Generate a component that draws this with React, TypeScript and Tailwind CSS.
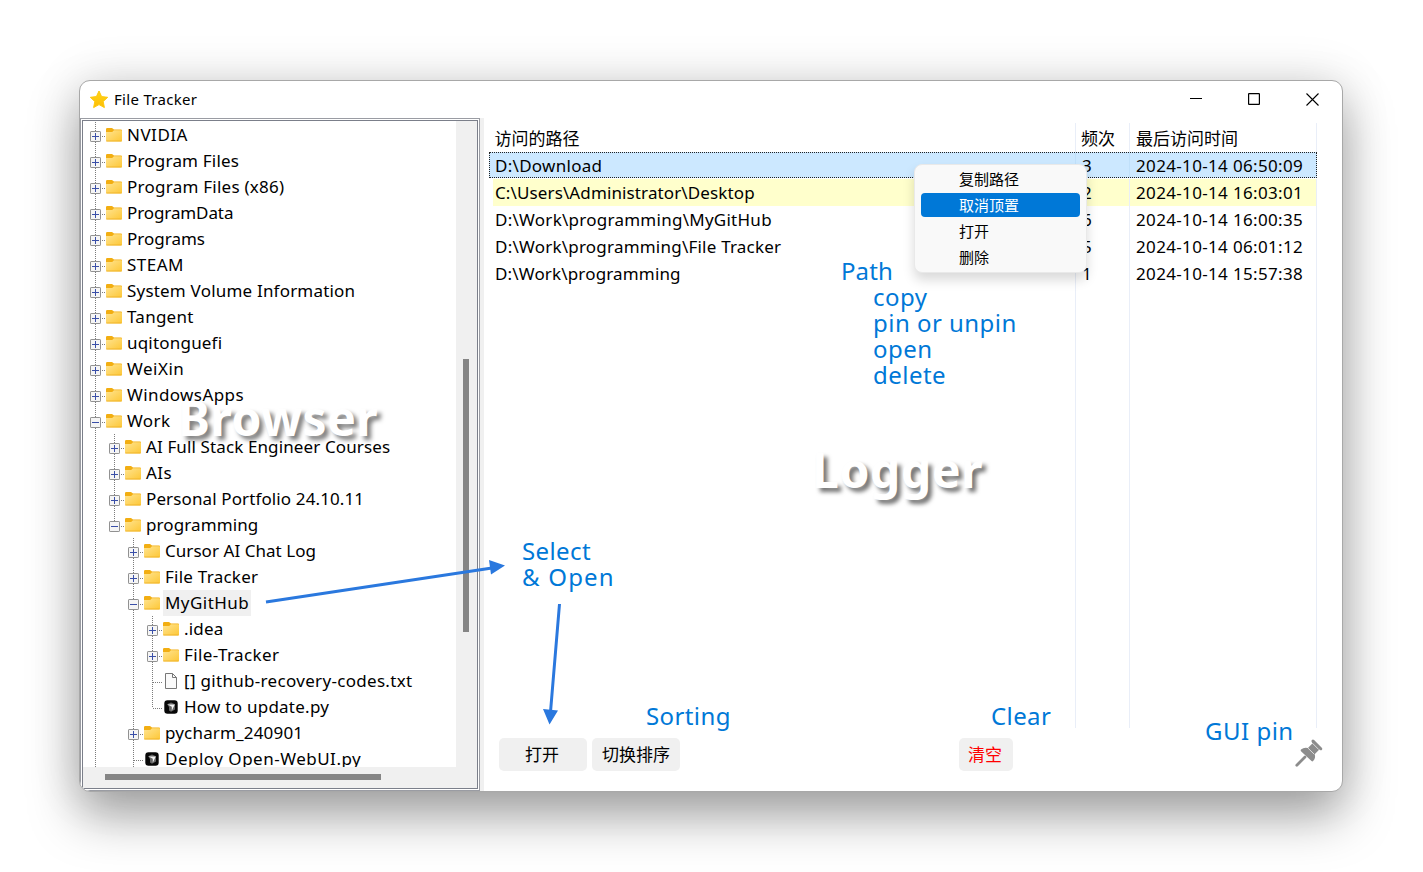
import React from "react";

type Kind = "folder" | "text" | "python";
type Guide = "line" | "none";

interface TreeRow {
  label: string;
  depth: number;
  kind?: Kind;
  open?: boolean;
  last?: boolean;
  selected?: boolean;
  /** Which ancestor levels still have siblings below this row. */
  trail?: Guide[];
  tracking?: string;
}

const tree: TreeRow[] = [
  { label: "NVIDIA", depth: 0, tracking: "tracking-[0.5px]" },
  { label: "Program Files", depth: 0 },
  { label: "Program Files (x86)", depth: 0, tracking: "tracking-[0.25px]" },
  { label: "ProgramData", depth: 0, tracking: "tracking-[-0.1px]" },
  { label: "Programs", depth: 0, tracking: "tracking-[0px]" },
  { label: "STEAM", depth: 0, tracking: "tracking-[0.5px]" },
  { label: "System Volume Information", depth: 0 },
  { label: "Tangent", depth: 0, tracking: "tracking-[0.25px]" },
  { label: "uqitonguefi", depth: 0 },
  { label: "WeiXin", depth: 0, tracking: "tracking-[0.5px]" },
  { label: "WindowsApps", depth: 0, tracking: "tracking-[0.4px]" },
  { label: "Work", depth: 0, open: true, tracking: "tracking-[0.4px]" },
  { label: "AI Full Stack Engineer Courses", depth: 1, trail: ["line"], tracking: "tracking-[0.12px]" },
  { label: "AIs", depth: 1, trail: ["line"], tracking: "tracking-[0.4px]" },
  { label: "Personal Portfolio 24.10.11", depth: 1, trail: ["line"], tracking: "tracking-[0.12px]" },
  { label: "programming", depth: 1, open: true, last: true, trail: ["line"], tracking: "tracking-[0.1px]" },
  { label: "Cursor AI Chat Log", depth: 2, trail: ["line", "none"], tracking: "tracking-[0.05px]" },
  { label: "File Tracker", depth: 2, trail: ["line", "none"], tracking: "tracking-[0.25px]" },
  { label: "MyGitHub", depth: 2, open: true, selected: true, trail: ["line", "none"], tracking: "tracking-[0.45px]" },
  { label: ".idea", depth: 3, trail: ["line", "none", "line"] },
  { label: "File-Tracker", depth: 3, trail: ["line", "none", "line"], tracking: "tracking-[0.4px]" },
  { label: "[] github-recovery-codes.txt", depth: 3, kind: "text", trail: ["line", "none", "line"], tracking: "tracking-[0.31px]" },
  { label: "How to update.py", depth: 3, kind: "python", last: true, trail: ["line", "none", "line"], tracking: "tracking-[0.25px]" },
  { label: "pycharm_240901", depth: 2, trail: ["line", "none"], tracking: "tracking-[0.17px]" },
  { label: "Deploy Open-WebUI.py", depth: 2, kind: "python", trail: ["line", "none"], tracking: "tracking-[0.5px]" },
];

const logs = [
  { path: "D:\\Download", count: 3, time: "2024-10-14 06:50:09" },
  { path: "C:\\Users\\Administrator\\Desktop", count: 2, time: "2024-10-14 16:03:01" },
  { path: "D:\\Work\\programming\\MyGitHub", count: 6, time: "2024-10-14 16:00:35" },
  { path: "D:\\Work\\programming\\File Tracker", count: 5, time: "2024-10-14 06:01:12" },
  { path: "D:\\Work\\programming", count: 1, time: "2024-10-14 15:57:38" },
];

function FolderIcon() {
  return (
    <svg width="16" height="14" viewBox="0 0 16 14" className="block shrink-0">
      <defs>
        <linearGradient id="folder" x1="0" y1="0" x2="1" y2="1">
          <stop offset="0" stopColor="#ffe491" />
          <stop offset="1" stopColor="#fdc736" />
        </linearGradient>
      </defs>
      <path d="M0 1.200Q0 0 1.200 0H6l2 1.500h7q1 0 1 1V5H0z" fill="#f2ae12" />
      <path d="M0 4h6.200L8 2.300h7.200q.8 0 .8.8v9.400q0 .9-1 .9H1q-1 0-1-1z" fill="url(#folder)" />
      <path d="M.3 13h15.400" stroke="#eeaf25" strokeWidth=".8" />
    </svg>
  );
}

function TextFileIcon() {
  return (
    <svg width="16" height="16" viewBox="0 0 16 16" className="block shrink-0">
      <path d="M2.500.5h7l4 4v11h-11z" fill="#fafafa" stroke="#777" />
      <path d="M9.500.5v4h4" fill="none" stroke="#777" />
    </svg>
  );
}

function PythonFileIcon() {
  return (
    <svg width="16" height="16" viewBox="0 0 16 16" className="block shrink-0">
      <rect x="1.300" y="1.200" width="13.400" height="13.600" rx="3.200" fill="#080808" />
      <path d="M4.200 5.200L8 3.600l4 1.600v5.200l-4 2.400-2-1.400V8z" fill="#666" />
      <path d="M4.500 5.400h7.300L8.800 11.800V7.800z" fill="#f3f3f3" />
    </svg>
  );
}

function Expander({ open }: { open?: boolean }) {
  return (
    <svg width="11" height="11" viewBox="0 0 11 11" className="block">
      <rect x=".5" y=".5" width="10" height="10" rx=".6" fill="#f5f5f5" stroke="#919191" />
      <path d="M2 5.500h7" stroke="#3a4fa8" />
      {!open && <path d="M5.500 2v7" stroke="#3a4fa8" />}
    </svg>
  );
}

const dotsV = "bg-[repeating-linear-gradient(to_bottom,#7c7c7c_0_1px,transparent_1px_2px)]";
const dotsH = "bg-[repeating-linear-gradient(to_right,#7c7c7c_0_1px,transparent_1px_2px)]";

function TreeItem({ row }: { row: TreeRow }) {
  const kind = row.kind ?? "folder";
  const isFolder = kind === "folder";
  return (
    <li className="flex h-[26px] shrink-0 items-stretch pl-[3px]">
      {(row.trail ?? []).map((g, i) => (
        <span key={i} className="flex w-[19px] shrink-0 justify-center">
          {g === "line" && <span className={`w-px ${dotsV}`} />}
        </span>
      ))}
      <span className="relative flex w-5 shrink-0 pl-[9px]">
        <span className={`w-px ${row.last ? "h-[14px]" : "h-full"} ${dotsV}`} />
        <span className={`mt-[14px] h-px flex-1 ${dotsH}`} />
        {isFolder && (
          <span className="absolute left-1 top-[9px]">
            <Expander open={row.open} />
          </span>
        )}
      </span>
      <span className={`flex w-4 shrink-0 ${isFolder ? "pt-[6px]" : "pt-[5px]"}`}>
        {kind === "folder" && <FolderIcon />}
        {kind === "text" && <TextFileIcon />}
        {kind === "python" && <PythonFileIcon />}
      </span>
      <span
        className={`ml-[3px] whitespace-pre pl-[2px] pr-[2px] text-[17px] leading-[25px] ${row.tracking ?? "tracking-[0.2px]"} ${row.selected ? "bg-[#f0f0f0]" : ""}`}
      >
        {row.label}
      </span>
    </li>
  );
}

function TitleBar() {
  return (
    <header className="flex h-[37px] shrink-0 items-center pb-px pl-[9px] text-black">
      <svg width="20" height="19" viewBox="0 0 20 19" className="shrink-0">
        <defs>
          <linearGradient id="star" x1="0" y1="0" x2="0" y2="1">
            <stop offset="0" stopColor="#ffd51a" />
            <stop offset="1" stopColor="#fdbd05" />
          </linearGradient>
        </defs>
        <path
          d="M10 1l2.600 5.600 6.100.7-4.500 4.200 1.200 6.100L10 14.600l-5.400 3 1.200-6.100L1.300 7.300l6.100-.7z"
          fill="url(#star)"
          stroke="#fdc80e"
          strokeLinejoin="round"
        />
      </svg>
      <h1 className="-mt-px ml-[5px] text-[15px] leading-5 tracking-[0.3px]">File Tracker</h1>
      <div className="ml-auto flex items-center gap-[46px] pr-[23.500px]">
        <svg width="12" height="12" viewBox="0 0 12 12">
          <path d="M0 5.500h12" stroke="#000" />
        </svg>
        <svg width="12" height="12" viewBox="0 0 12 12">
          <rect x=".6" y=".6" width="10.800" height="10.800" rx=".5" fill="none" stroke="#000" strokeWidth="1.200" />
        </svg>
        <svg width="13" height="13" viewBox="0 0 13 13">
          <path d="M.5.5l12 12M12.500.5l-12 12" stroke="#000" strokeWidth="1.100" />
        </svg>
      </div>
    </header>
  );
}

function Browser() {
  return (
    <section className="w-[400px] shrink-0 border border-[#9a9ca3] bg-white p-px">
      <div className="flex h-full flex-col border border-[#7b7f8a] bg-[#f0f0f0]">
        <div className="flex min-h-0 flex-1">
          <ul className="flex w-[373px] flex-col overflow-hidden bg-white pt-px">
            {tree.map((row) => (
              <TreeItem key={row.label} row={row} />
            ))}
          </ul>
          <div className="flex-1 pl-[7px] pt-[238px]">
            <div className="h-[273px] w-[6px] bg-[#858585]" />
          </div>
        </div>
        <div className="h-[21px] pl-[22px] pt-[7px]">
          <div className="h-[6px] w-[276px] bg-[#858585]" />
        </div>
      </div>
    </section>
  );
}

function ContextMenu() {
  return (
    <div className="absolute left-[914px] top-[164px] flex h-[109px] w-[173px] flex-col rounded-lg border border-[#e9e9e9] bg-[#f9f9f9] px-[6px] pt-px text-[15px] shadow-[0_7px_12px_rgba(0,0,0,0.15)]">
      <div className="flex h-[26px] items-center pl-[38px]">复制路径</div>
      <div className="flex h-[26px] items-center">
        <div className="flex h-6 flex-1 items-center rounded bg-[#0078d7] pl-[38px] text-white">取消顶置</div>
      </div>
      <div className="flex h-[26px] items-center pl-[38px]">打开</div>
      <div className="flex h-[26px] items-center pl-[38px]">删除</div>
    </div>
  );
}

const rowTone = ["bg-[#cce8ff]", "bg-[#ffffcc]", "", "", ""];
const pathTracking = [
  "tracking-[0.28px]",
  "tracking-[0.12px]",
  "tracking-[0.26px]",
  "tracking-[0.22px]",
  "tracking-[0.16px]",
];

function Logger() {
  return (
    <section className="flex min-w-0 flex-1 flex-col border-l-4 border-[#f0f0f0] pl-[5px] text-[17px]">
      <div className="mt-[5px] grid h-[605px] w-[828px] grid-cols-[587px_54px_187px] grid-rows-[29px_27px_27px_27px_27px_27px_1fr]">
        <div className="border-r border-[#e9eef8] pl-[5.500px] leading-[31px]">访问的路径</div>
        <div className="border-r border-[#e9eef8] pl-[5px] leading-[31px]">频次</div>
        <div className="border-r border-[#e9eef8] pl-[6px] leading-[31px]">最后访问时间</div>
        {logs.map((log, i) => (
          <LogRow key={log.path} log={log} index={i} />
        ))}
        <div className="border-r border-[#e9eef8]" />
        <div className="border-r border-[#e9eef8]" />
        <div className="border-r border-[#e9eef8]" />
      </div>
      <footer className="mt-[10px] flex items-start pl-[10px]">
        <button className="h-[33px] w-[88px] rounded-[5px] bg-[#f0f0f0] pr-0.5">打开</button>
        <button className="ml-[5px] h-[33px] w-[88px] rounded-[5px] bg-[#f0f0f0]">切换排序</button>
        <button className="ml-[279px] h-[33px] w-[54px] rounded-[5px] bg-[#f0f0f0] pr-0.5 text-[#ff0000]">清空</button>
        <svg width="28" height="28" viewBox="0 0 28 28" className="ml-[282px] mt-px">
          <path d="M1.800 26.200l8.200-8.200" stroke="#8c8c8c" strokeWidth="2.800" strokeLinecap="round" />
          <path
            d="M16.800 3q-.9-1.200.1-2 1.100-.9 2.200.1l7.700 7.700q1 1.100.2 2-.9.900-2 .3l-.7-.5-4.600 4.700q1.300 3.500-1.600 6.800-.8.700-1.600-.1L6 12.200q-.8-.9 0-1.600 3-2.700 6.900-1.600l4.500-4.600z"
            fill="#8c8c8c"
          />
          <path d="M17.300 4.100l6.500 6.500M12.900 9l6.300 6.200" stroke="#fff" strokeWidth=".7" />
        </svg>
      </footer>
    </section>
  );
}

function LogRow({ log, index }: { log: (typeof logs)[number]; index: number }) {
  if (index === 0) {
    return (
      <div className="col-span-3 mb-px flex items-stretch border border-dotted border-[#222] bg-[#cce8ff]">
        <span className={`w-[586px] border-r border-[#c0e0fa] pl-[5px] leading-[25px] ${pathTracking[0]}`}>{log.path}</span>
        <span className="w-[54px] border-r border-[#c0e0fa] pl-[6px] leading-[25px]">{log.count}</span>
        <span className="pl-[6px] leading-[25px] tracking-[0.34px]">{log.time}</span>
      </div>
    );
  }
  return (
    <>
      <div className="border-r border-[#e9eef8] pl-1">
        <div className={`h-full pl-[2px] leading-[27px] ${pathTracking[index]} ${rowTone[index]}`}>{log.path}</div>
      </div>
      <div className={`border-r border-[#e9eef8] pl-[6px] leading-[27px] ${rowTone[index]}`}>{log.count}</div>
      <div className={`border-r border-[#e9eef8] pl-[6px] leading-[27px] tracking-[0.34px] ${rowTone[index]}`}>{log.time}</div>
    </>
  );
}

function Notes() {
  return (
    <div className="pointer-events-none absolute inset-0 whitespace-pre text-2xl leading-[26px] tracking-[0.4px] text-[#0078d7]">
      <div className="absolute left-[841px] top-[258px] tracking-[0.1px]">Path</div>
      <div className="absolute left-[873px] top-[284px] tracking-[0.47px]">{"copy\npin or unpin\nopen\ndelete"}</div>
      <div className="absolute left-[522px] top-[538px]">Select</div>
      <div className="absolute left-[522px] top-[564px] tracking-[1.2px]">&amp; Open</div>
      <div className="absolute left-[646px] top-[703px]">Sorting</div>
      <div className="absolute left-[991px] top-[703px]">Clear</div>
      <div className="absolute left-[1205px] top-[718px] tracking-[0.5px]">GUI pin</div>
      <div className="absolute left-[178px] top-[388px] text-[48px] font-bold leading-[60px] tracking-[0.5px] text-white [text-shadow:4px_4px_4px_rgba(0,0,0,0.5)]">
        Browser
      </div>
      <div className="absolute left-[812px] top-[440px] text-[48px] font-bold leading-[60px] tracking-[0.6px] text-white [text-shadow:4px_4px_4px_rgba(0,0,0,0.55)]">
        Logger
      </div>
      <svg width="1423" height="872" viewBox="0 0 1423 872" className="absolute left-0 top-0">
        <path d="M266 602L492 568M559.500 604L550.500 712" stroke="#2a78de" strokeWidth="3" />
        <path d="M489 560l16 5.500-14 9zM543 709l15 1.500-8.500 14z" fill="#2a78de" />
      </svg>
    </div>
  );
}

export default function App() {
  return (
    <main className="relative h-[872px] w-[1423px] overflow-hidden bg-white pl-[79px] pt-[80px] font-['Noto_Sans','Noto_Sans_CJK_SC',sans-serif] text-black">
      <div className="flex h-[712px] w-[1264px] flex-col overflow-hidden rounded-[11px] border border-[#a8a8a8] bg-white shadow-[0_25px_50px_rgba(0,0,0,0.34),0_0_50px_rgba(0,0,0,0.12)]">
        <TitleBar />
        <div className="flex min-h-0 flex-1">
          <Browser />
          <Logger />
        </div>
      </div>
      <ContextMenu />
      <Notes />
    </main>
  );
}
